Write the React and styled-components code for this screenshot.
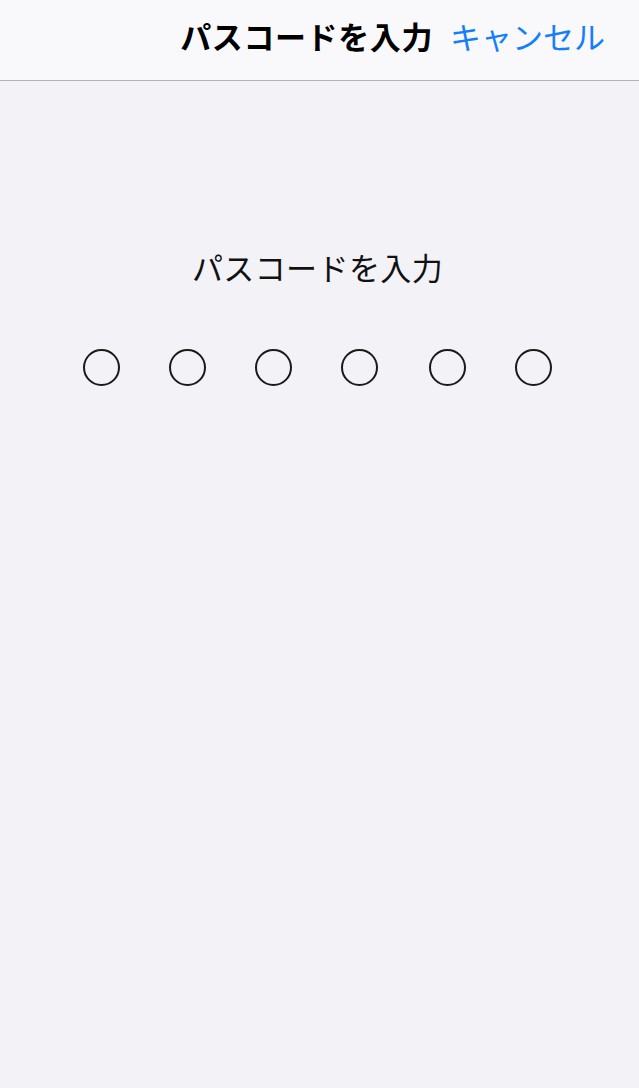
import React from 'react';
import styled, { createGlobalStyle } from 'styled-components';

const Global = createGlobalStyle`
  html, body {
    margin: 0;
    padding: 0;
    background: #f2f2f7;
  }
  body {
    font-family: "Noto Sans CJK JP", "Noto Sans", sans-serif;
  }
`;

const Screen = styled.div`
  min-height: 1088px;
  background: #f2f2f7;
`;

const NavBar = styled.header`
  height: 81px;
  box-sizing: border-box;
  background: #f9f9fb;
  border-bottom: 1px solid #b1b1b4;
  display: flex;
  align-items: center;
  justify-content: flex-end;
  gap: 17px;
  padding: 0 34px 9px 0;
`;

const NavTitle = styled.h1`
  margin: 0;
  font-size: 31px;
  font-weight: 700;
  color: #000;
  letter-spacing: 0.6px;
`;

const Cancel = styled.button`
  border: none;
  background: none;
  padding: 0;
  font-family: inherit;
  font-size: 31px;
  color: #157efb;
  cursor: pointer;
`;

const Body = styled.main`
  display: flex;
  flex-direction: column;
  align-items: center;
  padding-top: 159px;
`;

const Prompt = styled.p`
  margin: 0;
  font-size: 31px;
  font-weight: 400;
  color: #111;
  padding-right: 4px;
  line-height: 54px;
  letter-spacing: 0.4px;
`;

const Dots = styled.div`
  display: flex;
  gap: 49px;
  margin-top: 55px;
  padding-right: 4px;
`;

const Dot = styled.span`
  width: 37px;
  height: 37px;
  box-sizing: border-box;
  border-radius: 50%;
  border: 2px solid #1a1a1a;
  background: ${p => (p.$filled ? '#1a1a1a' : 'transparent')};
  margin-left: ${p => (p.$wide ? '2px' : '0')};
`;

export default function App() {
  const digits = [0, 0, 0, 0, 0, 0];
  return (
    <Screen>
      <Global />
      <NavBar>
        <NavTitle>パスコードを入力</NavTitle>
        <Cancel>キャンセル</Cancel>
      </NavBar>
      <Body>
        <Prompt>パスコードを入力</Prompt>
        <Dots>
          {digits.map((d, i) => (
            <Dot key={i} $filled={false} $wide={i === 4} />
          ))}
        </Dots>
      </Body>
    </Screen>
  );
}
